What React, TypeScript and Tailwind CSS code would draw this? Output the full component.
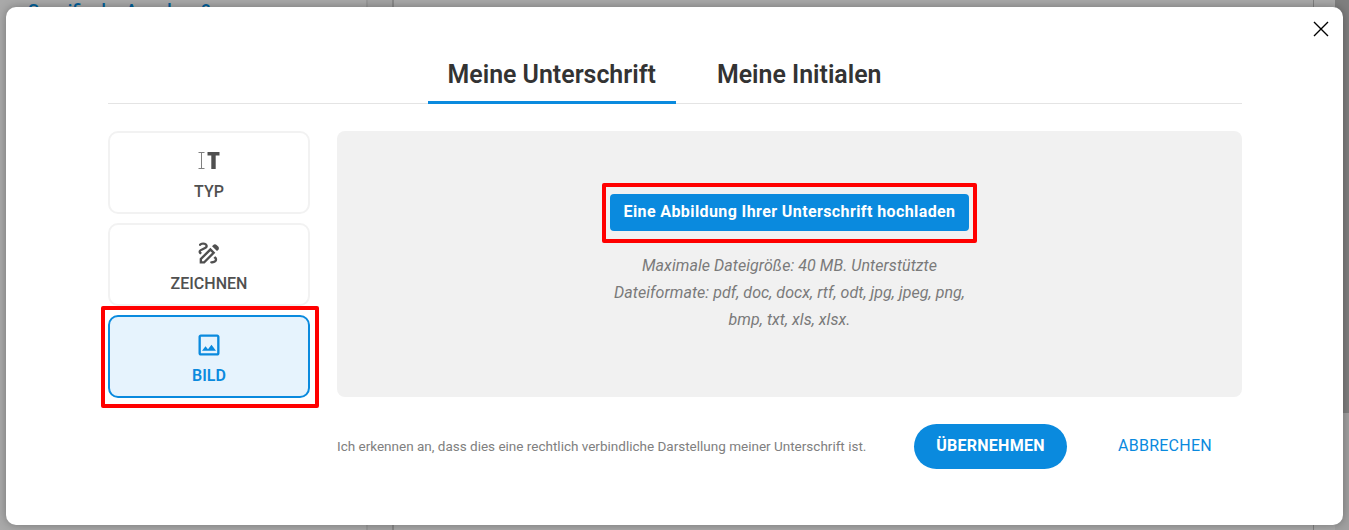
const DRAW = "M18.85 10.39l1.06-1.06c.78-.78.78-2.05 0-2.83L18.5 5.09c-.78-.78-2.05-.78-2.83 0l-1.06 1.06 4.24 4.24zM14.61 11.81L7.41 19H6v-1.41l7.19-7.19 1.42 1.41m-1.42-4.25L4 16.76V21h4.24l9.19-9.19-4.24-4.25zM19 17.5c0 2.19-2.54 3.5-5 3.5-.55 0-1-.45-1-1s.45-1 1-1c1.54 0 3-.73 3-1.5 0-.47-.48-.87-1.23-1.2l1.48-1.48c1.07.63 1.75 1.47 1.75 2.68zM4.58 13.35C3.61 12.79 3 12.06 3 11c0-1.8 1.89-2.63 3.56-3.36C7.59 7.18 9 6.56 9 6c0-.41-.78-1-2-1-1.26 0-1.8.61-1.83.64-.35.41-.98.46-1.4.12-.41-.34-.49-.95-.15-1.38C3.73 4.24 4.76 3 7 3s4 1.32 4 3c0 1.87-1.93 2.72-3.64 3.47C6.42 9.88 5 10.5 5 11c0 .31.43.6 1.07.86l-1.49 1.49z";
const IMAGE = "M19 5v14H5V5h14m0-2H5c-1.1 0-2 .9-2 2v14c0 1.1.9 2 2 2h14c1.1 0 2-.9 2-2V5c0-1.1-.9-2-2-2zm-4.86 8.86l-3 3.87L9 13.14 6 17h12l-3.86-5.14z";

function TypeIcon() {
  return (
    <svg width="28" height="28" viewBox="0 0 28 28" className="block">
      <path d="M3.5 5.5h6M3.5 21.5h6M6.5 5.5v16" stroke="#808080" strokeWidth="1" fill="none" />
      <path d="M12.5 5h12v3.4h-3.8V22h-4.4V8.4h-3.8z" fill="#505050" />
    </svg>
  );
}

function Icon({ d }: { d: string }) {
  return (
    <svg width="28" height="28" viewBox="0 0 24 24" fill="currentColor" className="block">
      <path d={d} />
    </svg>
  );
}

function Card({ label, active, icon }: { label: string; active?: boolean; icon: React.ReactNode }) {
  return (
    <div
      className={
        active
          ? "relative flex h-[83px] flex-col items-center rounded-[10px] border-2 border-[#0a8ade] bg-[#e6f3fd] pt-[14px] text-[#0a8ade]"
          : "relative flex h-[83px] flex-col items-center rounded-[10px] border-2 border-[#f2f2f2] bg-white pt-[14px] text-[#505050]"
      }
    >
      {icon}
      <span className={active ? "mt-[5px] text-[16px] leading-[24px] font-semibold" : "mt-[5px] text-[16px] leading-[24px] font-medium"}>{label}</span>
    </div>
  );
}

export default function App() {
  return (
    <div className="relative h-[530px] w-[1349px] overflow-hidden bg-[#a9a9a9] pl-[6px] pt-[7px] font-['Roboto',sans-serif]">
      <div className="absolute left-[28px] top-[2px] text-[18px] leading-[18px] font-medium text-[#005f99]">Spezifische Angaben ?</div>
      <div className="absolute left-[366px] top-0 h-full w-[28px] border-x-2 border-l-[#9a9a9a] border-r-[#8a8a8a] bg-[#a4a4a4]" />
      <div className="absolute left-[1313px] top-0 h-full w-px bg-[#808080]" />
      <div className="absolute right-0 top-0 h-full w-[14px] bg-[#a0a0a0]" />
      <div className="absolute right-0 top-0 h-[413px] w-[14px] bg-[#7f7f7f]" />

      <div className="relative h-[518px] w-[1337px] rounded-[10px] bg-white pl-[102px] pr-[101px] shadow-[0_0_10px_rgba(0,0,0,0.3)]">
        <button className="absolute right-[14px] top-[14px] text-black">
          <svg width="16" height="16" viewBox="0 0 16 16" className="block">
            <path d="M1 1l14 14M15 1L1 15" stroke="currentColor" strokeWidth="1.4" fill="none" />
          </svg>
        </button>

        <div className="flex h-[97px] justify-center border-b border-[#e4e4e4]">
          <div className="mr-[21px] mt-[45px] h-[52px] border-b-[3px] border-[#0a8ade] px-[20px] text-[24.9px] leading-[46px] font-semibold text-[#333]">
            Meine Unterschrift
          </div>
          <div className="mr-[21px] mt-[45px] h-[52px] px-[20px] text-[24.9px] leading-[46px] font-semibold text-[#333]">
            Meine Initialen
          </div>
        </div>

        <div className="mt-[27px] flex gap-[27px]">
          <div className="flex w-[202px] shrink-0 flex-col gap-[9px]">
            <Card label="TYP" icon={<TypeIcon />} />
            <Card label="ZEICHNEN" icon={<Icon d={DRAW} />} />
            <div className="relative">
              <Card label="BILD" active icon={<Icon d={IMAGE} />} />
              <div className="pointer-events-none absolute -bottom-[10px] -left-[7px] -right-[9px] -top-[9px] rounded-[2px] border-4 border-[#ff0000]" />
            </div>
          </div>

          <div className="flex-1">
            <div className="flex h-[266px] flex-col items-center rounded-[8px] bg-[#f1f1f1] pt-[63px]">
              <div className="relative">
                <button className="block h-[37px] w-[359px] rounded-[4px] bg-[#0a8ade] pb-[1px] text-center text-[16px] font-bold tracking-[0.4px] text-white">
                  Eine Abbildung Ihrer Unterschrift hochladen
                </button>
                <div className="pointer-events-none absolute -bottom-[12px] -left-[8px] -right-[8px] -top-[11px] rounded-[2px] border-4 border-[#ff0000]" />
              </div>
              <p className="mt-[21px] w-[380px] text-center text-[16px] leading-[27px] tracking-[0.06px] italic text-[#7a7a7a]">
                Maximale Dateigröße: 40 MB. Unterstützte Dateiformate: pdf, doc, docx, rtf, odt, jpg, jpeg, png, bmp, txt, xls, xlsx.
              </p>
            </div>

            <div className="mt-[27px] flex h-[45px] items-center">
              <span className="w-[529px] whitespace-nowrap pb-[1px] text-[13.5px] text-[#808080]">
                Ich erkennen an, dass dies eine rechtlich verbindliche Darstellung meiner Unterschrift ist.
              </span>
              <button className="ml-[48px] h-[45px] w-[153px] rounded-full bg-[#0a8ade] pb-[1px] text-[16px] font-bold tracking-[0.25px] text-white">
                ÜBERNEHMEN
              </button>
              <button className="ml-[51px] pb-[1px] text-[16px] tracking-[0.25px] text-[#0a8ade]">ABBRECHEN</button>
            </div>
          </div>
        </div>
      </div>
    </div>
  );
}
